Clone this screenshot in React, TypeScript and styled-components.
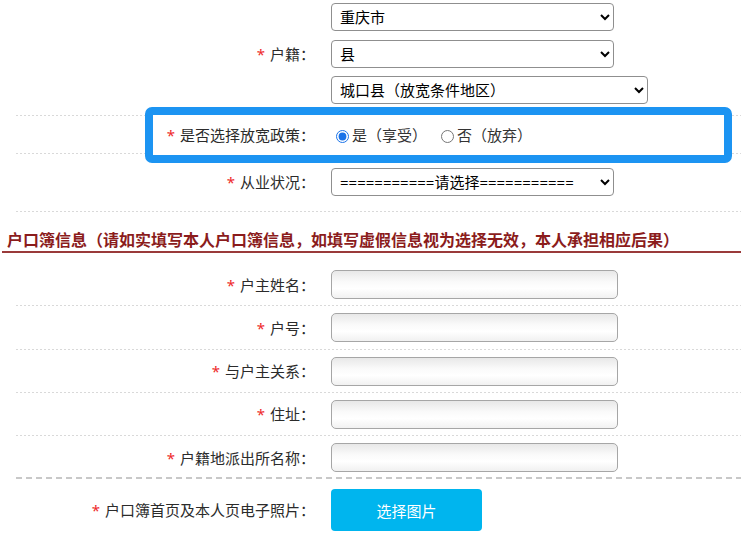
import styled, { createGlobalStyle } from "styled-components";

const GlobalStyle = createGlobalStyle`
  html, body {
    margin: 0;
    padding: 0;
    background: #fff;
  }
  body {
    font-family: "Noto Sans", "Noto Sans CJK SC", sans-serif;
    font-size: 15px;
    color: #333;
    overflow: hidden;
  }
`;

const Page = styled.div`
  width: 741px;
  height: 540px;
  overflow: hidden;
`;

const Block = styled.div<{ $top?: number }>`
  margin: ${(p) => p.$top ?? 0}px 0 0 16px;
`;

const Row = styled.div<{ $pad: string; $strong?: boolean; $noLine?: boolean }>`
  position: relative;
  display: flex;
  align-items: center;
  gap: 16px;
  padding: ${(p) => p.$pad};
  background-image: ${(p) =>
    p.$noLine
      ? "none"
      : p.$strong
      ? "repeating-linear-gradient(to right, #c8c8c8 0 6px, transparent 6px 10px)"
      : "repeating-linear-gradient(to right, #d9d9d9 0 2px, transparent 2px 4px)"};
  background-size: 100% ${(p) => (p.$strong ? "2px" : "1px")};
  background-position: left bottom;
  background-repeat: no-repeat;
`;

const Label = styled.label`
  position: relative;
  z-index: 1;
  flex: 0 0 299px;
  text-align: right;
  font-size: 15px;
  line-height: 20px;
  color: #2b2b2b;
  white-space: nowrap;
`;

const Star = styled.span`
  color: #ee2a2a;
  margin-right: 5px;
`;

const Field = styled.div<{ $column?: boolean }>`
  position: relative;
  z-index: 1;
  display: flex;
  flex-direction: ${(p) => (p.$column ? "column" : "row")};
  align-items: ${(p) => (p.$column ? "flex-start" : "center")};
  gap: 8.5px;
`;

const Select = styled.select<{ $w: number }>`
  box-sizing: border-box;
  width: ${(p) => p.$w}px;
  height: 28px;
  font-family: "Noto Sans", "Noto Sans CJK SC", sans-serif;
  font-size: 15px;
  color: #000;
  background: #fff;
  border: 1px solid #8f8f8f;
  border-radius: 4px;
  padding: 0 4px;
`;

const TextInput = styled.input`
  box-sizing: border-box;
  width: 287px;
  height: 29px;
  border: 1px solid #a6a6a6;
  border-radius: 5px;
  background: linear-gradient(to bottom, #e8e8e8 0%, #fafafa 40%, #fff 65%, #f1f1f1 100%);
  font-size: 15px;
  padding: 0 8px;
  outline: none;
`;

const Highlight = styled.div`
  position: absolute;
  left: 129px;
  right: 9px;
  top: -9px;
  bottom: -9px;
  border: 8px solid #1c94f2;
  border-radius: 7px;
  background: #fff;
  z-index: 0;
`;

const Radio = styled.input`
  width: 13px;
  height: 13px;
  margin: 3px 3px 0 5px;
  accent-color: #1a73e8;
`;

const RadioText = styled.span<{ $gap?: number }>`
  font-size: 15px;
  line-height: 20px;
  color: #333;
  margin-right: ${(p) => p.$gap ?? 0}px;
`;

const RadioGroup = styled.div`
  display: flex;
  align-items: center;
`;

const SectionTitle = styled.h3`
  margin: 17px 0 0 2px;
  padding: 0 0 0 5px;
  font-size: 16px;
  line-height: 22px;
  font-weight: bold;
  color: #8b1c1c;
  border-bottom: 2px solid #9a3a3a;
  white-space: nowrap;
`;

const Upload = styled.button`
  width: 151px;
  height: 42px;
  border: none;
  border-radius: 4px;
  background: #00b5ee;
  color: #fff;
  font-family: "Noto Sans", "Noto Sans CJK SC", sans-serif;
  font-size: 15px;
  cursor: pointer;
`;

const inputRows = ["户主姓名", "户号", "与户主关系", "住址", "户籍地派出所名称"];

export default function App() {
  return (
    <Page>
      <GlobalStyle />
      <Block>
        <Row $pad="3px 0 12px">
          <Label>
            <Star>*</Star>户籍：
          </Label>
          <Field $column>
            <Select $w={283} defaultValue="cq">
              <option value="cq">重庆市</option>
            </Select>
            <Select $w={283} defaultValue="x">
              <option value="x">县</option>
            </Select>
            <Select $w={317} defaultValue="ck">
              <option value="ck">城口县（放宽条件地区）</option>
            </Select>
          </Field>
        </Row>
        <Row $pad="9px 0 9px">
          <Highlight />
          <Label>
            <Star>*</Star>是否选择放宽政策：
          </Label>
          <Field>
            <RadioGroup>
              <Radio type="radio" name="policy" defaultChecked />
              <RadioText $gap={9}>是（享受）</RadioText>
              <Radio type="radio" name="policy" />
              <RadioText>否（放弃）</RadioText>
            </RadioGroup>
          </Field>
        </Row>
        <Row $pad="14px 0 16px">
          <Label>
            <Star>*</Star>从业状况：
          </Label>
          <Field>
            <Select $w={283} defaultValue="none">
              <option value="none">===========请选择===========</option>
            </Select>
          </Field>
        </Row>
      </Block>
      <SectionTitle>
        户口簿信息（请如实填写本人户口簿信息，如填写虚假信息视为选择无效，本人承担相应后果）
      </SectionTitle>
      <Block $top={10}>
        {inputRows.map((name, i) => (
          <Row key={name} $pad="7px 0 7.25px" $strong={i === inputRows.length - 1}>
            <Label>
              <Star>*</Star>
              {name}：
            </Label>
            <Field>
              <TextInput type="text" />
            </Field>
          </Row>
        ))}
        <Row $pad="9.75px 0 10px" $noLine>
          <Label>
            <Star>*</Star>户口簿首页及本人页电子照片：
          </Label>
          <Field>
            <Upload type="button">选择图片</Upload>
          </Field>
        </Row>
      </Block>
    </Page>
  );
}
